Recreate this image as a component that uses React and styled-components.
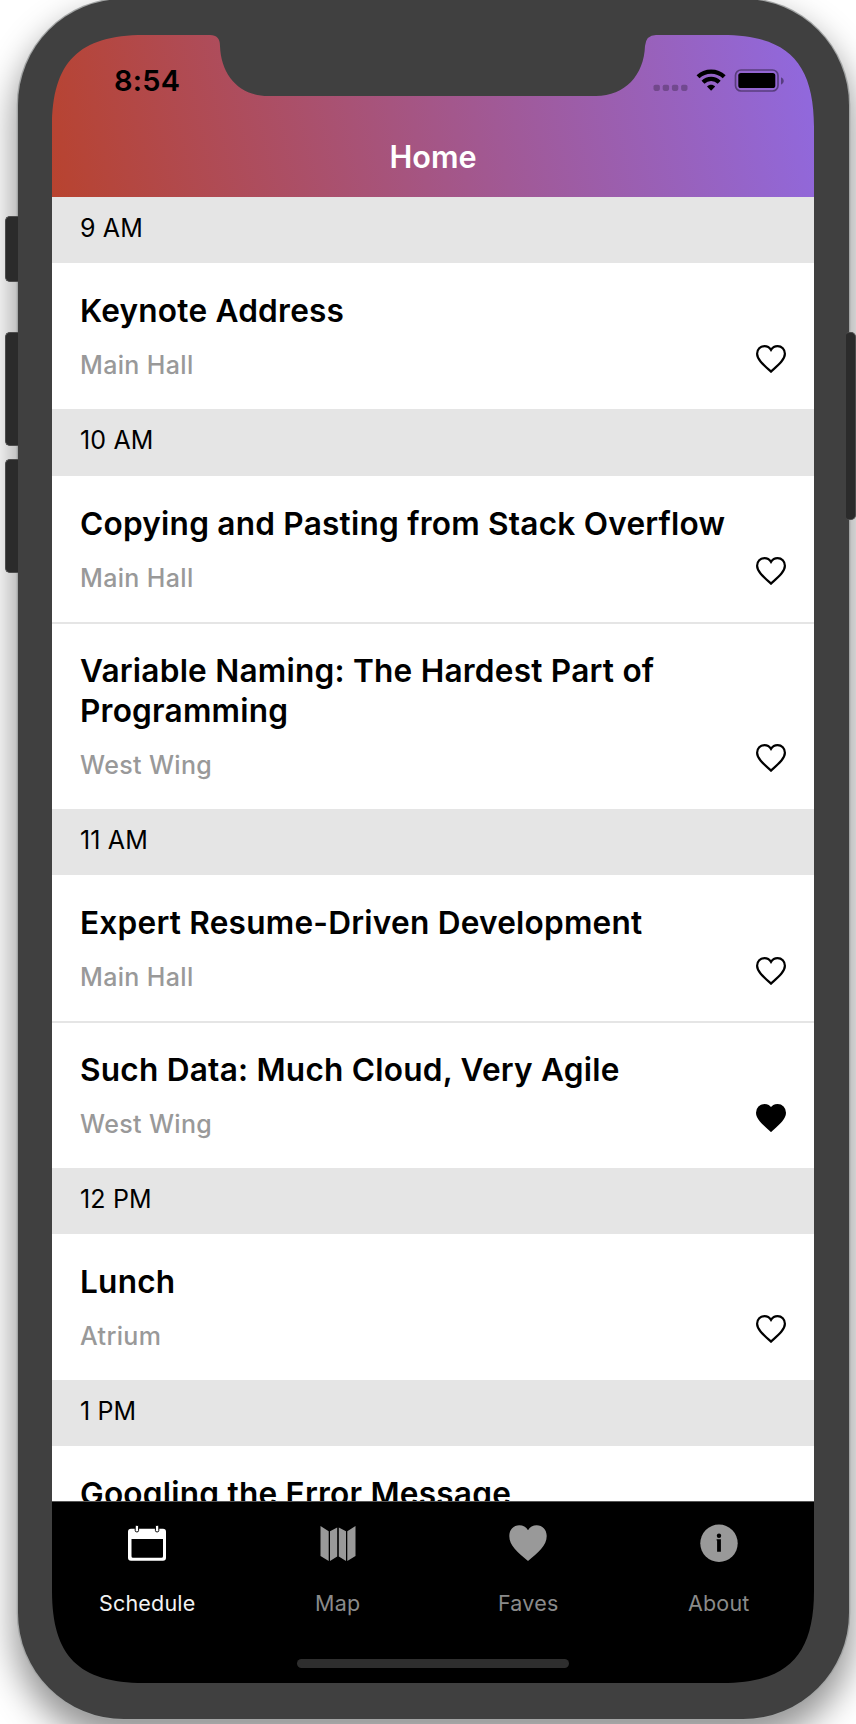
import React from "react";
import styled, { createGlobalStyle, css } from "styled-components";

const Global = createGlobalStyle`
  * { box-sizing: border-box; }
  html, body, #root { margin: 0; height: 100%; }
  body { background: #fff; overflow: hidden; font-family: Inter, "Liberation Sans", sans-serif; }
`;

const Stage = styled.div`
  position: relative;
  width: 856px;
  height: 1724px;
  overflow: hidden;
  background: #fff;
  padding: 0 7.5px 0 17.5px;
`;

const Body = styled.div`
  position: relative;
  width: 831px;
  height: 1720px;
  margin-top: -1px;
  padding: 36px 34.5px;
  border-radius: 106px;
  background: #404040;
  box-shadow: 0 0 0 1.3px #a3a5a5, 0 18px 34px 4px rgba(0, 0, 0, 0.42);
`;

const SideButton = styled.div`
  position: absolute;
  top: ${(p) => p.$top}px;
  height: ${(p) => p.$height}px;
  width: 13px;
  background: #2b2b2b;
  border: 1.5px solid #4d4d4d;
  ${(p) =>
    p.$right
      ? css`right: 0; border-radius: 3px 5px 5px 3px; width: 10px; border-left: 0;`
      : css`left: 5px; border-radius: 5px 0 0 5px; border-right: 0;`}
`;

const Screen = styled.div`
  display: flex;
  flex-direction: column;
  width: 762px;
  height: 1648px;
  clip-path: path("M0 92C0 27 27 0 92 0H158Q168 0 168 11C169 40 187 61 216 61H544C573 61 592 40 593 11Q594 0 604 0H670C735 0 762 27 762 92V1556C762 1621 735 1648 670 1648H92C27 1648 0 1621 0 1556Z");
`;

const Header = styled.header`
  flex: none;
  height: 162px;
  background: linear-gradient(78deg, #b8432f, #9069e0);
`;

const StatusBar = styled.div`
  display: flex;
  align-items: center;
  justify-content: space-between;
  height: 91px;
  padding: 0 29.5px 0 62px;
`;

const Clock = styled.span`
  font-size: 29px;
  font-weight: 600;
  letter-spacing: 0.2px;
`;

const Indicators = styled.div`
  display: flex;
  align-items: center;
  padding-top: 1px;
`;

const NavTitle = styled.h1`
  margin: 0;
  text-align: center;
  color: #fff;
  font-size: 30.6px;
  font-weight: 600;
  line-height: 61px;
`;

const List = styled.main`
  flex: none;
  height: 1304px;
  overflow: hidden;
  background: #fff;
`;

const SectionHeader = styled.div`
  height: 66.2px;
  padding: 0 28px;
  background: #e5e5e5;
  font-size: 25px;
  line-height: 62.5px;
  letter-spacing: 0.15px;
`;

const Item = styled.div`
  position: relative;
  padding: 28px 28px 0;
  height: ${(p) => (p.$tall ? 187 : 146.3)}px;
  & + & { border-top: 2px solid #e5e5e5; padding-top: 27px; }
`;

const Title = styled.h2`
  margin: 0;
  width: 670px;
  font-size: 31.6px;
  font-weight: 600;
  line-height: 40px;
  letter-spacing: 0.22px;
  white-space: pre-line;
`;

const ItemFoot = styled.div`
  display: flex;
  justify-content: space-between;
  align-items: flex-start;
  padding-top: 16px;
`;

const Place = styled.span`
  color: #999;
  font-size: 25px;
  font-weight: 500;
  line-height: 36px;
  letter-spacing: 0.35px;
`;

const HeartSvg = styled.svg`
  display: block;
  width: 30px;
  height: 28px;
  margin-top: -2.5px;
`;

const TabBar = styled.nav`
  flex: 1;
  background: #000;
  border-top: 1px solid #555;
`;

const Tabs = styled.div`
  display: grid;
  grid-template-columns: repeat(4, 1fr);
`;

const Tab = styled.div`
  display: flex;
  flex-direction: column;
  align-items: center;
  color: ${(p) => (p.$active ? "#fff" : "#999")};
  padding-top: 20px;
  svg { width: 42px; height: 42px; display: block; }
`;

const TabLabel = styled.span`
  margin-top: 24px;
  font-size: 21.5px;
  line-height: 30px;
  letter-spacing: 0.2px;
  color: ${(p) => (p.$active ? "#f2f2f2" : "#8a8a8a")};
`;

const HomeIndicator = styled.div`
  width: 272px;
  height: 9px;
  margin: 41px auto 0;
  border-radius: 5px;
  background: #2e2e2e;
`;

const Heart = ({ filled }) => (
  <HeartSvg viewBox="0 0 30 28">
    <path
      d="M15 26.6C8 20.2 1.1 14.8 1.1 8.8C1.1 4.4 4.3 1.2 8.4 1.2C11.2 1.2 13.6 2.6 15 4.9C16.4 2.6 18.8 1.2 21.6 1.2C25.7 1.2 28.9 4.4 28.9 8.8C28.9 14.8 22 20.2 15 26.6Z"
      fill={filled ? "#000" : "none"}
      stroke="#000"
      strokeWidth="2.2"
      strokeLinejoin="miter"
    />
  </HeartSvg>
);

const Signal = () => (
  <svg width="132" height="24" viewBox="0 0 132 24">
    <g fill="#000" fillOpacity=".25">
      {[0.5, 9.7, 18.9, 28.1].map((x) => (
        <rect key={x} x={x} y="15.7" width="6.4" height="6.2" rx="1.8" />
      ))}
    </g>
    <g fill="none" stroke="#000" strokeWidth="4.2">
      <path d="M45 7.8A19 19 0 0 1 71.2 7.8" />
      <path d="M50 13.3A11.5 11.5 0 0 1 66.2 13.3" />
    </g>
    <path d="M58.1 21.8L54 17.5C56.4 15.3 59.8 15.3 62.2 17.5Z" />
    <g opacity=".4">
      <rect x="82.5" y="1" width="42.5" height="21" rx="5.5" fill="none" stroke="#000" strokeWidth="1.7" />
      <path d="M128 8.2Q130.8 9.5 130.8 12Q130.8 14.5 128 15.8Z" />
    </g>
    <rect x="85.3" y="4" width="37" height="15" rx="2.6" />
  </svg>
);

const icons = {
  Schedule: (
    <svg viewBox="0 0 42 42">
      <path
        fill="currentColor"
        fillRule="evenodd"
        d="M5 6.800H37Q40 6.800 40 9.800V35.700Q40 38.700 37 38.700H5Q2 38.700 2 35.700V9.800Q2 6.800 5 6.800ZM5.500 17V34.200Q5.500 35.700 7 35.700H35.500Q37 35.700 37 34.200V17Z"
      />
      <g fill="#fff" stroke="#000" strokeWidth="1">
        <rect x="9.200" y="3.300" width="3.400" height="6.600" rx="1.500" />
        <rect x="29.400" y="3.300" width="3.400" height="6.600" rx="1.500" />
      </g>
    </svg>
  ),
  Map: (
    <svg viewBox="0 0 42 42">
      <path
        fill="currentColor"
        d="M3.500 4L11.700 9.300V39L3.500 34ZM13 9.300L20.200 5.500V34.500L13 39ZM21.800 5.500L29 9.300V39L21.800 34.500ZM30.300 9.300L38.500 4V34L30.300 39Z"
      />
    </svg>
  ),
  Faves: (
    <svg viewBox="0 0 42 42">
      <path
        fill="currentColor"
        d="M21 39C10.500 30.500 2.300 23.300 2.300 14C2.300 7.500 6.700 3.300 12.300 3.300C16 3.300 19.200 5.200 21 8.200C22.800 5.200 26 3.300 29.700 3.300C35.300 3.300 39.700 7.500 39.700 14C39.700 23.300 31.500 30.500 21 39Z"
      />
    </svg>
  ),
  About: (
    <svg viewBox="0 0 42 42">
      <circle cx="21" cy="21.300" r="18.700" fill="currentColor" />
      <circle cx="21" cy="13.800" r="2.200" />
      <path d="M18.600 17.300H22.900V29.800H19.100V18.500H18.600Z" />
    </svg>
  ),
};

const schedule = [
  { time: "9 AM", items: [{ title: "Keynote Address", place: "Main Hall" }] },
  {
    time: "10 AM",
    items: [
      { title: "Copying and Pasting from Stack Overflow", place: "Main Hall" },
      { title: "Variable Naming: The Hardest Part of\nProgramming", place: "West Wing", tall: true },
    ],
  },
  {
    time: "11 AM",
    items: [
      { title: "Expert Resume-Driven Development", place: "Main Hall" },
      { title: "Such Data: Much Cloud, Very Agile", place: "West Wing", fave: true },
    ],
  },
  { time: "12 PM", items: [{ title: "Lunch", place: "Atrium" }] },
  { time: "1 PM", items: [{ title: "Googling the Error Message" }] },
];

export default function App() {
  return (
    <Stage>
      <Global />
      <Body>
        <Screen>
          <Header>
            <StatusBar>
              <Clock>8:54</Clock>
              <Indicators>
                <Signal />
              </Indicators>
            </StatusBar>
            <NavTitle>Home</NavTitle>
          </Header>
          <List>
            {schedule.map((s) => (
              <section key={s.time}>
                <SectionHeader>{s.time}</SectionHeader>
                {s.items.map((i) => (
                  <Item key={i.title} $tall={i.tall}>
                    <Title>{i.title}</Title>
                    {i.place && (
                      <ItemFoot>
                        <Place>{i.place}</Place>
                        <Heart filled={i.fave} />
                      </ItemFoot>
                    )}
                  </Item>
                ))}
              </section>
            ))}
          </List>
          <TabBar>
            <Tabs>
              {Object.keys(icons).map((name) => (
                <Tab key={name} $active={name === "Schedule"}>
                  {icons[name]}
                  <TabLabel $active={name === "Schedule"}>{name}</TabLabel>
                </Tab>
              ))}
            </Tabs>
            <HomeIndicator />
          </TabBar>
        </Screen>
      </Body>
      <SideButton $top={216} $height={66} />
      <SideButton $top={332} $height={114} />
      <SideButton $top={459} $height={114} />
      <SideButton $right $top={332} $height={188} />
    </Stage>
  );
}
